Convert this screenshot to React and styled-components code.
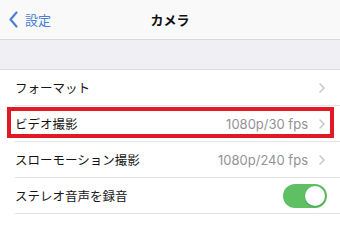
import React from "react";
import styled, { createGlobalStyle } from "styled-components";

const GlobalStyle = createGlobalStyle`
  html, body {
    margin: 0;
    padding: 0;
    background: #ffffff;
  }
  body {
    font-family: "Inter", "Noto Sans CJK JP", sans-serif;
    -webkit-font-smoothing: antialiased;
  }
`;

const Screen = styled.div`
  width: 340px;
  height: 232px;
  overflow: hidden;
  background: #ffffff;
`;

const NavBar = styled.div`
  height: 39px;
  display: grid;
  grid-template-columns: 1fr auto 1fr;
  align-items: center;
  background: #f9f9fa;
  border-bottom: 1px solid #d9d9dd;
`;

const Back = styled.div`
  display: flex;
  align-items: center;
  gap: 7px;
  padding-left: 9px;
  color: #4a80d4;
  font-size: 13px;
  font-family: "Noto Sans CJK JP", sans-serif;
`;

const Title = styled.div`
  font-size: 13px;
  font-weight: 600;
  color: #111;
  font-family: "Noto Sans CJK JP", sans-serif;
`;

const GroupGap = styled.div`
  height: 29px;
  background: #efeff4;
  border-bottom: 1px solid #dcdce0;
`;

const Row = styled.div`
  position: relative;
  background: #fff;
  padding-left: 15px;
`;

const RowInner = styled.div`
  height: 35px;
  display: flex;
  align-items: center;
  padding-right: ${(p) => (p.$toggle ? "13px" : "15px")};
  border-bottom: 1px solid #e2e2e5;
`;

const Label = styled.div`
  flex: 1;
  font-size: 12.5px;
  color: #151515;
  font-family: "Noto Sans CJK JP", sans-serif;
`;

const Value = styled.div`
  font-size: 13px;
  color: #929297;
  margin-right: 11px;
`;

const Highlight = styled.div`
  position: absolute;
  top: 1px;
  left: 7px;
  right: 6px;
  height: 31px;
  border: 4px solid #e21a26;
  box-sizing: border-box;
  pointer-events: none;
`;

const Toggle = styled.div`
  width: 44px;
  height: 24px;
  border-radius: 12px;
  background: #5ec063;
  display: flex;
  align-items: center;
  justify-content: flex-end;
  padding: 2px;
  box-sizing: border-box;
`;

const Knob = styled.div`
  width: 20px;
  height: 20px;
  border-radius: 50%;
  background: #fff;
  box-shadow: 0 1px 2px rgba(0, 0, 0, 0.2);
`;

const BackChevron = () => (
  <svg width="9" height="17" viewBox="0 0 9 17">
    <polyline
      points="7.5,1.5 1.5,8.5 7.5,15.5"
      fill="none"
      stroke="#4a80d4"
      strokeWidth="2.2"
      strokeLinecap="round"
      strokeLinejoin="round"
    />
  </svg>
);

const Chevron = () => (
  <svg width="6" height="10" viewBox="0 0 6 10">
    <polyline
      points="1,1 5,5 1,9"
      fill="none"
      stroke="#c4c4c8"
      strokeWidth="1.4"
      strokeLinecap="round"
      strokeLinejoin="round"
    />
  </svg>
);

const rows = [
  { label: "フォーマット" },
  { label: "ビデオ撮影", value: "1080p/30 fps", marked: true },
  { label: "スローモーション撮影", value: "1080p/240 fps" },
  { label: "ステレオ音声を録音", toggle: true },
];

export default function App() {
  return (
    <Screen>
      <GlobalStyle />
      <NavBar>
        <Back>
          <BackChevron />
          設定
        </Back>
        <Title>カメラ</Title>
        <div />
      </NavBar>
      <GroupGap />
      {rows.map((r) => (
        <Row key={r.label}>
          <RowInner $toggle={r.toggle}>
            <Label>{r.label}</Label>
            {r.value && <Value>{r.value}</Value>}
            {r.toggle ? (
              <Toggle>
                <Knob />
              </Toggle>
            ) : (
              <Chevron />
            )}
          </RowInner>
          {r.marked && <Highlight />}
        </Row>
      ))}
    </Screen>
  );
}
